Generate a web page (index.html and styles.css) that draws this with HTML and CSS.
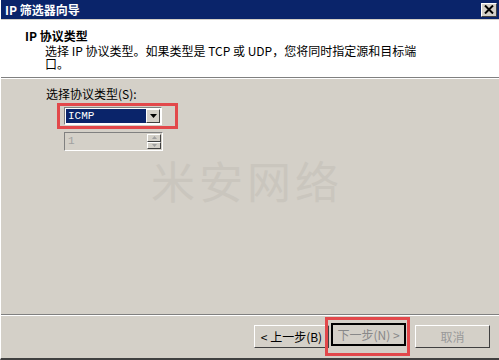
FILE: index.html
```html
<!DOCTYPE html>
<html lang="zh-CN">
<head>
  <meta charset="UTF-8">
  <title>IP 筛选器向导</title>
  <link rel="stylesheet" href="styles.css">
</head>
<body>
  <div class="wizard">
    <div class="titlebar">
      <span class="title">IP 筛选器向导</span>
      <span class="close">
        <svg width="10" height="9" viewBox="0 0 10 9">
          <path d="M1 0.5 L9 8.5 M9 0.5 L1 8.5" stroke="#000" stroke-width="2"/>
        </svg>
      </span>
    </div>

    <div class="header">
      <h1>IP 协议类型</h1>
      <p>选择 IP 协议类型。如果类型是 TCP 或 UDP，您将同时指定源和目标端口。</p>
    </div>

    <main class="content">
      <label class="field-label">选择协议类型(S):</label>
      <div class="highlight select-hl">
        <div class="combo">
          <span class="combo-value">ICMP</span>
          <span class="combo-btn">
            <svg width="7" height="4" viewBox="0 0 7 4"><path d="M0 0 H7 L3.5 4 Z" fill="#000"/></svg>
          </span>
        </div>
      </div>
      <div class="spin">
        <span class="spin-value">1</span>
        <span class="spin-btns">
          <span class="spin-btn"><svg width="5" height="3" viewBox="0 0 5 3"><path d="M0 3 H5 L2.5 0 Z" fill="#a0a0a0"/></svg></span>
          <span class="spin-btn"><svg width="5" height="3" viewBox="0 0 5 3"><path d="M0 0 H5 L2.5 3 Z" fill="#a0a0a0"/></svg></span>
        </span>
      </div>
      <div class="watermark">米安网络</div>
    </main>

    <footer class="footer">
      <button class="btn">&lt; 上一步(B)</button>
      <div class="highlight next-hl">
        <button class="btn btn-default">下一步(N) &gt;</button>
      </div>
      <button class="btn btn-cancel">取消</button>
    </footer>
  </div>
</body>
</html>
```

FILE: styles.css
```css
/* Dialog frame */
body {
  margin: 0;
  font-family: "Noto Sans CJK SC", "DejaVu Sans", sans-serif;
  font-size: 12px;
  color: #000;
  background: #d4d0c8;
}

.wizard {
  width: 499px;
  height: 360px;
  box-sizing: border-box;
  display: flex;
  flex-direction: column;
  border-left: 1px solid #ffffff;
  border-bottom: 2px solid #404040;
  background: #d4d0c8;
}

/* Title bar */
.titlebar {
  height: 19px;
  background: #0a246a;
  display: flex;
  justify-content: space-between;
  align-items: center;
  padding: 0 2px 0 4px;
  border-bottom: 1px solid #d4d0c8;
}

.title {
  color: #fff;
  font-weight: bold;
  font-size: 12px;
  line-height: 19px;
}

.close {
  width: 16px;
  height: 14px;
  box-sizing: border-box;
  background: #d4d0c8;
  border: 1px solid;
  border-color: #fff #404040 #404040 #fff;
  display: flex;
  align-items: center;
  justify-content: center;
}

/* Header section */
.header {
  height: 58px;
  background: #fff;
  padding: 8px 0 0 24px;
  box-sizing: border-box;
  border-bottom: 1px solid #808080;
  box-shadow: 0 1px 0 #fff;
}

.header h1 {
  margin: 0;
  font-size: 12px;
  font-weight: bold;
  line-height: 16px;
}

.header p {
  margin: 0 0 0 20px;
  width: 376px;
  line-height: 13px;
}

/* Content */
.content {
  flex: 1;
  padding: 9px 0 0 45px;
}

.field-label {
  display: block;
  line-height: 14px;
}

.highlight {
  border: 3px solid #e2484b;
  display: inline-flex;
}

.select-hl {
  margin: 2px 0 0 11px;
  padding: 1px 13px 1px 4px;
}

.combo {
  width: 98px;
  height: 18px;
  box-sizing: border-box;
  background: #fff;
  border: 1px solid;
  border-color: #808080 #fff #fff #808080;
  display: flex;
  padding: 1px;
}

.combo-value {
  flex: 1;
  background: #0a246a;
  color: #fff;
  font-family: "Liberation Mono", monospace;
  font-size: 11px;
  line-height: 14px;
  padding-left: 2px;
}

.combo-btn,
.spin-btn {
  background: #d4d0c8;
  border: 1px solid;
  border-color: #fff #404040 #404040 #fff;
  box-sizing: border-box;
  display: flex;
  align-items: center;
  justify-content: center;
}

.combo-btn {
  width: 14px;
}

.spin {
  margin: 3px 0 0 18px;
  width: 99px;
  height: 19px;
  box-sizing: border-box;
  background: #d4d0c8;
  border: 1px solid;
  border-color: #808080 #fff #fff #808080;
  display: flex;
  padding: 1px;
}

.spin-value {
  flex: 1;
  color: #a0a0a0;
  font-family: "Liberation Mono", monospace;
  font-size: 11px;
  line-height: 15px;
  padding-left: 2px;
}

.spin-btns {
  width: 14px;
  display: flex;
  flex-direction: column;
}

.spin-btn {
  flex: 1;
}

.watermark {
  margin: 4px 0 0 105px;
  font-size: 44px;
  letter-spacing: 4px;
  color: #cac6be;
  line-height: 50px;
}

/* Footer buttons */
.footer {
  height: 44px;
  box-sizing: border-box;
  border-top: 1px solid #808080;
  box-shadow: inset 0 1px 0 #fff;
  display: flex;
  align-items: center;
  padding: 0 8px 0 253px;
}

.btn {
  width: 75px;
  height: 23px;
  box-sizing: border-box;
  background: #d4d0c8;
  border: 1px solid;
  border-color: #fff #404040 #404040 #fff;
  font-family: inherit;
  font-size: 12px;
  padding: 0;
}

.next-hl {
  margin-left: -4px;
  padding: 3px 1px 7px 3px;
}

.btn-default {
  border: 2px solid #000;
  color: #888;
}

.btn-cancel {
  color: #999;
  margin-left: 5px;
}
```
